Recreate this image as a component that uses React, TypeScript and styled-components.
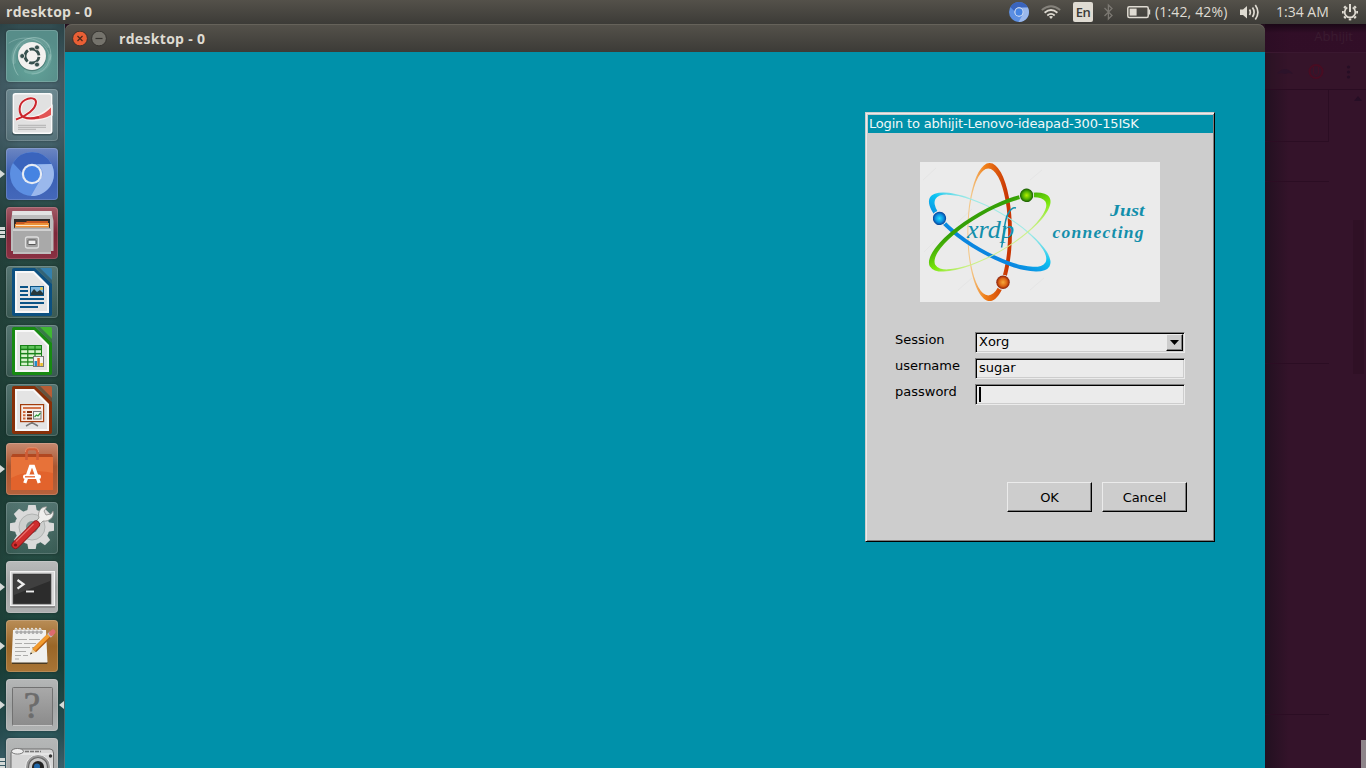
import React from 'react';
import styled, { createGlobalStyle } from 'styled-components';

const TEAL = '#0091aa';
const UI_FONT = '"Open Sans", "Noto Sans", sans-serif';

const GlobalStyle = createGlobalStyle`
  * { box-sizing: border-box; }
  body { margin: 0; overflow: hidden; background: #34132a; }
`;

const Desktop = styled.div`
  width: 1366px;
  height: 768px;
  overflow: hidden;
  display: flex;
  flex-direction: column;
  font-family: ${UI_FONT};
`;

const TopPanel = styled.header`
  height: 24px;
  flex: none;
  display: flex;
  align-items: center;
  justify-content: space-between;
  padding: 0 8px 0 6px;
  background: linear-gradient(#54514a, #3c3b37);
  color: #dfdbd2;
`;

const TitleText = styled.span`
  font-size: 14px;
  line-height: 20px;
  font-weight: 700;
  letter-spacing: 0.32px;
  color: #dfdbd2;
  white-space: pre;
`;

const Tray = styled.div`
  display: flex;
  align-items: center;
  height: 24px;
`;

const TrayCell = styled.div<{ $w: number; $gap: number }>`
  width: ${p => p.$w}px;
  margin-left: ${p => p.$gap}px;
  height: 24px;
  flex: none;
  display: flex;
  align-items: center;
`;

const TrayText = styled.span<{ $spacing: number }>`
  font-size: 14px;
  line-height: 24px;
  white-space: nowrap;
  letter-spacing: ${p => p.$spacing}px;
`;

const LangBadge = styled.div`
  width: 20px;
  height: 20px;
  border-radius: 2px;
  background: #dfdbd2;
  color: #3c3b37;
  font: 600 13px/21px ${UI_FONT};
  text-align: center;
  letter-spacing: -0.5px;
`;

const Workspace = styled.div`
  flex: 1;
  min-height: 0;
  display: flex;
`;

const Launcher = styled.nav`
  width: 65px;
  flex: none;
  overflow: hidden;
  display: flex;
  flex-direction: column;
  gap: 7px;
  padding: 6px 7px 0 6px;
  border-right: 1px solid rgba(150, 170, 170, 0.35);
  background:
    linear-gradient(90deg, rgba(0, 0, 0, 0.12), transparent 30%, transparent 80%, rgba(0, 0, 0, 0.12)),
    linear-gradient(#314c50 0, #46626b 50px, #4a6670 105px, #35565a 150px, #274741 200px, #25483f 330px,
      #1c3e36 420px, #254b42 540px, #1c443c 640px, #2c565a 710px, #456b77 744px);
`;

const Tile = styled.div<{ $bg: string }>`
  position: relative;
  width: 52px;
  height: 52px;
  flex: none;
  border-radius: 4px;
  background: ${p => p.$bg};
  box-shadow: inset 0 0 0 1px rgba(255, 255, 255, 0.16), 0 0 3px rgba(0, 0, 0, 0.35);
  svg { display: block; }
`;

const RunningPip = styled.i<{ $side: 'left' | 'right' }>`
  position: absolute;
  top: 22px;
  ${p => (p.$side === 'left'
    ? 'left: -6px; border-left: 5px solid #d5dad8;'
    : 'right: -6px; border-right: 5px solid #d5dad8;')}
  border-top: 4px solid transparent;
  border-bottom: 4px solid transparent;
`;

const StackPip = styled.i`
  position: absolute;
  left: -6px;
  top: 20px;
  width: 5px;
  height: 11px;
  background: repeating-linear-gradient(#d5dad8 0 3px, transparent 3px 4px);
`;

const WindowFrame = styled.section`
  width: 1200px;
  flex: none;
  display: flex;
  flex-direction: column;
  background: #24101f;
`;

const WindowBar = styled.div`
  height: 28px;
  flex: none;
  display: flex;
  align-items: center;
  padding: 1px 7px 0;
  border-radius: 7px 7px 0 0;
  background: linear-gradient(#55524b, #3c3b37);
  box-shadow: inset 0 1px 0 #65625a;
`;

const WindowControls = styled.div`
  display: flex;
  gap: 3px;
  margin-right: 12px;
`;

const RemoteScreen = styled.main`
  flex: 1;
  min-height: 0;
  display: flex;
  justify-content: flex-end;
  align-items: flex-start;
  padding: 60px 50px 0 0;
  background: ${TEAL};
`;

const Dialog = styled.form`
  width: 350px;
  height: 430px;
  display: flex;
  flex-direction: column;
  background: #cdcdcd;
  font: 13px/16px "DejaVu Sans", sans-serif;
  color: #000;
  border: 1px solid;
  border-color: #cdcdcd #000 #000 #cdcdcd;
  box-shadow: inset 1px 1px 0 #ebebeb, inset -1px -1px 0 #7e7e7e;
  padding: 2px 1px 0 2px;
`;

const DialogTitle = styled.div`
  height: 18px;
  flex: none;
  padding-left: 1px;
  background: ${TEAL};
  color: #f2f8f8;
  line-height: 18px;
  letter-spacing: -0.18px;
  white-space: nowrap;
`;

const Banner = styled.div`
  width: 240px;
  height: 140px;
  flex: none;
  margin: 29px 0 30px 52px;
  background: #ebebeb;
  svg { display: block; }
`;

const Fields = styled.div`
  display: grid;
  grid-template-columns: 80px 210px;
  grid-auto-rows: 21px;
  row-gap: 5px;
  margin-left: 27px;
`;

const FieldLabel = styled.label`
  line-height: 16px;
`;

const FieldBox = styled.div`
  display: flex;
  justify-content: space-between;
  height: 21px;
  border: 1px solid;
  border-color: #7e7e7e #ebebeb #ebebeb #7e7e7e;
  box-shadow: inset 1px 1px 0 #000, inset -1px -1px 0 #cdcdcd;
  background: #ebebeb;
  padding: 1px 1px 1px 3px;
  line-height: 15px;
`;

const Caret = styled.span`
  width: 2px;
  height: 15px;
  margin-top: 1px;
  background: #000;
`;

const DropButton = styled.span`
  width: 17px;
  height: 17px;
  display: flex;
  align-items: center;
  justify-content: center;
  border: 1px solid;
  border-color: #ebebeb #000 #000 #ebebeb;
  box-shadow: inset -1px -1px 0 #7e7e7e;
  background: #cdcdcd;
`;

const ButtonRow = styled.div`
  display: flex;
  gap: 10px;
  margin: 77px 0 0 139px;
`;

const PushButton = styled.button`
  width: 85px;
  height: 30px;
  padding: 1px 0 0;
  background: #cdcdcd;
  border: 1px solid;
  border-color: #ebebeb #000 #000 #ebebeb;
  box-shadow: inset -1px -1px 0 #7e7e7e;
  font: 13px/16px "DejaVu Sans", sans-serif;
  letter-spacing: -0.1px;
  color: #000;
`;

const BackWindow = styled.aside`
  flex: 1;
  min-width: 0;
  display: flex;
  flex-direction: column;
  background: linear-gradient(90deg, #221020 0, #28102200 24px), #34132a;
`;

const BackHeader = styled.div`
  height: 28px;
  flex: none;
  display: flex;
  justify-content: flex-end;
  padding: 3px 13px 0 0;
  font-size: 13px;
  line-height: 18px;
  color: #3a1b30;
  background: linear-gradient(#1a0716, rgba(48, 12, 38, 0.7) 9px);
`;

const BackToolbar = styled.div`
  height: 38px;
  flex: none;
  border-top: 1px solid #3a1830;
  border-bottom: 1px solid #2a0c22;
  background: rgba(56, 22, 42, 0.35);
`;

const BackBody = styled.div`
  flex: 1;
  min-height: 0;
  display: flex;
`;

const BackColumn = styled.div`
  width: 64px;
  flex: none;
`;

const BackBlock = styled.div<{ $h: number; $side?: boolean }>`
  height: ${p => p.$h}px;
  border-bottom: 1px solid #2b0d23;
  border-right: ${p => (p.$side ? '1px solid #2b0d23' : 'none')};
`;

const BackScroll = styled.div`
  flex: 1;
  display: flex;
  flex-direction: column;
  align-items: flex-end;
  justify-content: space-between;
  padding-top: 6px;
`;

const BackThumb = styled.div`
  width: 11px;
  height: 154px;
  margin: 0 2px 0 0;
  background: #2f1025;
`;

const ScrollColumn = styled.div`
  display: flex;
  flex-direction: column;
  gap: 119px;
`;

const OverlayThumb = styled.div`
  width: 5px;
  height: 28px;
  background: #8e858a;
`;

/* ---------- launcher artwork ---------- */

const Icon = ({ children }: { children: React.ReactNode }) => (
  <svg width="52" height="52" viewBox="0 0 52 52">{children}</svg>
);

const DashIcon = () => (
  <Icon>
    <g fill="none" stroke="#d5efe9" strokeLinecap="round">
      <path d="M12 45C3 34 6 12 24 8C38 5 48 17 44 30" strokeWidth=".9" opacity=".4" />
      <path d="M3 13C18 3 38 9 43 24C45 35 37 44 26 44" strokeWidth=".9" opacity=".28" />
      <path d="M14 15C22 7 36 8 42 16M44 26C44 37 32 46 20 41M8 32C6 24 9 17 15 13" strokeWidth="4" opacity=".14" />
    </g>
    <circle cx="26" cy="27" r="14.300" fill="#17312e" opacity=".35" />
    <circle cx="26" cy="26" r="14" fill="#f2f1ef" />
    <circle cx="26" cy="26" r="7" fill="none" stroke="#36504e" strokeWidth="2.800" strokeDasharray="12.9 1.76" strokeDashoffset="-.9" />
    <g fill="#36504e" stroke="#f2f1ef" strokeWidth=".8">
      <circle cx="16.200" cy="26" r="2.500" />
      <circle cx="31" cy="17.400" r="2.500" />
      <circle cx="31" cy="34.600" r="2.500" />
    </g>
  </Icon>
);

const PdfIcon = () => (
  <Icon>
    <rect x="6" y="5" width="41" height="41.5" rx="3" fill="#253b3e" opacity=".55" />
    <rect x="6.500" y="4" width="40" height="41" rx="3" fill="#fafafa" />
    <rect x="8" y="5.500" width="37" height="38" rx="2" fill="#e1e1e1" />
    <path d="M10 30.500C19 28 30 20 30 13C30 9 24 8 19 11C13 15 12 25 18 28C26 31 36 27 45 19V25.500C37 30 26 32 18 29" fill="none" stroke="#f9f1f0" strokeWidth="3.400" />
    <path d="M18 27.300C27 30 37 27 45 18.500V26C36 31 26 31.500 18 28.300Z" fill="#e25555" />
    <path d="M10 30.500C20 27.500 30 20 30 13C30 9 24 8 19 11C12 15 12 25 18 28.300C22 30 28 29.500 33 28" fill="none" stroke="#cb252c" strokeWidth="2" />
    <path d="M12 36.300H40M12 38.300H40M12 40.300H30" stroke="#aaa" strokeWidth=".9" />
  </Icon>
);

const ChromiumMark = ({ r, cx, cy }: { r: number; cx: number; cy: number }) => (
  <g transform={`translate(${cx} ${cy}) scale(${r / 22})`}>
    <circle r="22" fill="#5c8fe2" />
    <path d="M-19-11A22 22 0 0 1 19.500-10H0A10 10 0 0 0-9.500-1Z" fill="#3a64bd" />
    <path d="M19.500-10A22 22 0 0 1-1 22L8.700 5A10 10 0 0 0 5-9.500Z" fill="#9ab8ec" />
    <circle r="10.200" fill="#e6ebf3" />
    <circle r="8" fill="#4583e2" />
  </g>
);

const FilesIcon = () => (
  <Icon>
    <path d="M6.500 4H45.500L47.500 14V44H5V14Z" fill="#bdbdbd" />
    <path d="M6.500 4H45.500L46 8H6Z" fill="#e3e3e3" />
    <rect x="8" y="12" width="36" height="10" fill="#2f2c2b" />
    <path d="M10 15H20L21 14H42V22H9Z" fill="#c95a23" />
    <path d="M9 17H18L19 16H43V22H9Z" fill="#ed9137" />
    <path d="M10 18.500H42" stroke="#fce6c7" strokeWidth="1" />
    <path d="M7 22L9 20.500H43L45 22V47H7Z" fill="#a9a9a9" />
    <path d="M7 22H45V24H7Z" fill="#d0d0d0" />
    <path d="M7 46H45" stroke="#d6d6d6" />
    <rect x="19.500" y="30" width="13" height="11" rx="2" fill="#a0a0a0" stroke="#dedede" strokeWidth="1.300" />
    <rect x="22" y="33" width="8" height="4.500" rx=".7" fill="#eee" stroke="#555" />
  </Icon>
);

const DocumentBase = ({ frame, fold, children }: { frame: string; fold: string; children: React.ReactNode }) => (
  <Icon>
    <path d="M8 2H29L46 18V48Q46 50 44 50H8Q6 50 6 48V4Q6 2 8 2Z" fill={frame} />
    <path d="M34 2H44.500Q46 2 46 3.500V14Z" fill={fold} />
    <path d="M30 2H34L46 14V18Z" fill={frame} opacity=".45" />
    <path d="M9 5H28L43 20V47H9Z" fill="#f8f8f8" />
    <path d="M11 7H27L41 21V45H11Z" fill="#e4e4e4" />
    {children}
  </Icon>
);

const WriterIcon = () => (
  <DocumentBase frame="#0c5080" fold="#3480ad">
    <path d="M14 21H22M14 25H22M14 29H22M14 33H38M14 37H38M14 41H32" stroke="#0a5386" strokeWidth="2" />
    <rect x="24.500" y="20.500" width="13" height="9" fill="#7fb8df" stroke="#0a5386" />
    <path d="M25 29V27L28 23L31 26L34 24L37 27V29Z" fill="#29383b" />
    <circle cx="35.500" cy="22.500" r="1.500" fill="#e7c548" />
  </DocumentBase>
);

const CalcIcon = () => (
  <DocumentBase frame="#178a12" fold="#3fb832">
    <rect x="14" y="20" width="22" height="21" fill="#188118" />
    {[21, 25.200, 29.400, 33.600, 37.600].map(y => (
      <g key={y} fill={y === 21 ? '#5fc35a' : '#d8f3cd'}>
        <rect x="15.200" y={y} width="6" height="2.700" />
        <rect x="22.400" y={y} width="6" height="2.700" />
        <rect x="29.600" y={y} width="5.400" height="2.700" />
      </g>
    ))}
    <rect x="27.500" y="31.500" width="10" height="10" fill="#f2f2f2" stroke="#777" />
    <rect x="28.500" y="36" width="2.500" height="5" fill="#238cca" />
    <rect x="31.300" y="33" width="2.500" height="8" fill="#e06827" />
    <rect x="34.300" y="38" width="2.500" height="3" fill="#e8bd27" />
  </DocumentBase>
);

const ImpressIcon = () => (
  <DocumentBase frame="#873009" fold="#b85d35">
    <path d="M26 38V40M20 42L26 38.500L32 42" stroke="#777" strokeWidth="1.500" fill="none" />
    <rect x="14.600" y="20.600" width="23" height="17" fill="#f6ece6" stroke="#a23c0c" strokeWidth="1.200" />
    <path d="M17 24H35" stroke="#d0673a" strokeWidth="1.800" />
    <path d="M17 28H19.500M17 31.300H19.500M17 34.500H19.500" stroke="#d0673a" strokeWidth="1.900" />
    <path d="M21 28H26M21 31.300H26M21 34.500H26" stroke="#7a2b0b" strokeWidth="1.900" />
    <rect x="27.500" y="27.500" width="7.500" height="7.500" fill="#eef5ec" stroke="#777" />
    <path d="M28.500 33L30.500 31L32 32L34.500 29" fill="none" stroke="#2d973a" strokeWidth="1.200" />
  </DocumentBase>
);

const SoftwareIcon = () => (
  <Icon>
    <path d="M6.500 11H45.500L47 14H5Z" fill="#b14821" />
    <path d="M5 14H47V47H5Z" fill="#e2632c" />
    <path d="M5 14H47V30Q26 25 5 35Z" fill="#f08a4e" opacity=".4" />
    <path d="M20.500 17V9Q20.500 6 23.500 6H28.500Q31.500 6 31.500 9V17" fill="none" stroke="#cf5c36" strokeWidth="2.600" />
    <path d="M19.500 9Q19.500 4.800 23.500 4.800H28.500Q32.500 4.800 32.500 9" fill="none" stroke="#ef9a75" strokeWidth=".8" />
    <path d="M18.800 40L24.600 23.500H27.400L33.200 40" fill="none" stroke="#fff" strokeWidth="3.300" />
    <rect x="17" y="31.500" width="18" height="4.500" rx="2" fill="#fff" />
    <path d="M19 33.800H29" stroke="#e4622d" strokeWidth="1.300" />
  </Icon>
);

const SettingsIcon = () => (
  <Icon>
    <g fill="#dadada">
      <circle cx="26" cy="25" r="17.500" />
      {[0, 45, 90, 135, 180, 225, 270, 315].map(a => (
        <path key={a} d="M21 10L22.300 3H29.700L31 10Z" transform={`rotate(${a} 26 25)`} />
      ))}
    </g>
    <circle cx="26" cy="25" r="13" fill="#cdcfce" stroke="#b0b3b2" />
    <circle cx="26" cy="25" r="6" fill="#7b8f8d" />
    <path d="M31 25L28 21L33 16C31 9 36 4 41 5L38 9L40 13L45 12L47 9C49 15 43 20 37 19Z" fill="#efefed" stroke="#8a8a88" strokeWidth=".8" />
    <path d="M9.500 43L30 22.500" stroke="#8b1216" strokeWidth="8" strokeLinecap="round" />
    <path d="M9.500 43L30 22.500" stroke="#cf2e2e" strokeWidth="6.400" strokeLinecap="round" />
    <path d="M10 39.500L27.500 22" stroke="#e8706c" strokeWidth="1.200" />
    <circle cx="9.500" cy="43" r="1.600" fill="#7d1417" />
  </Icon>
);

const TerminalIcon = () => (
  <Icon>
    <rect x="4" y="10" width="45" height="37" rx="1" fill="#8c8c8c" />
    <rect x="4.500" y="10.500" width="44" height="34" fill="#dadada" stroke="#f2f2f2" />
    <rect x="7" y="13" width="38" height="30" fill="#2c2c2c" stroke="#555" strokeWidth=".7" />
    <path d="M8 14H44V20L8 34Z" fill="#4c4c4c" opacity=".6" />
    <path d="M11.500 19L17.500 23.300L11.500 27.600" fill="none" stroke="#eee" strokeWidth="2.300" />
    <path d="M20 30.500H28" stroke="#eee" strokeWidth="1.900" />
  </Icon>
);

const EditorIcon = () => (
  <Icon>
    <path d="M6 42H42L41 44H6Z" fill="#4a3a22" />
    <path d="M7 10H40L41.500 42.500H5.500Z" fill="#f0f0ee" />
    <path d="M9 19.500H21M23 19.500H34M9 23.500H16M18 23.500H30M9 27.500H24M26 27.500H33M9 31.500H20M9 35.500H15M17 35.500H22M9 39H13" stroke="#a5a5a3" strokeWidth=".9" />
    {[11, 15, 19, 23, 27, 31, 35].map(x => (
      <g key={x}>
        <circle cx={x} cy="12" r="1.500" fill="#555" />
        <path d={`M${x} 13V9.500Q${x - 1.500} 7 ${x - 2} 10`} fill="none" stroke="#e5e5e5" strokeWidth="1.200" />
      </g>
    ))}
    <path d="M24 34.500L26.500 28.500L29.800 32Z" fill="#ead0a0" />
    <path d="M24 34.500L24.900 32.300L26.200 33.600Z" fill="#222" />
    <path d="M28.200 30.500L43.500 15.500" stroke="#b45f12" strokeWidth="5.200" />
    <path d="M27.800 30L43 15" stroke="#f39c2e" strokeWidth="3.600" />
    <path d="M43 15.800L45.500 13.400" stroke="#b9bdc0" strokeWidth="5.200" />
    <path d="M45.500 13.400L47 12" stroke="#dc6b6f" strokeWidth="5" strokeLinecap="round" />
  </Icon>
);

const UnknownIcon = () => (
  <Icon>
    <defs>
      <linearGradient id="unknownPlate" x1="0" y1="0" x2="0" y2="1">
        <stop offset="0" stopColor="#a9a9a9" />
        <stop offset="1" stopColor="#8b8b8b" />
      </linearGradient>
    </defs>
    <rect x="6.500" y="8.500" width="40" height="38" rx="1" fill="url(#unknownPlate)" stroke="#717171" />
    <path d="M7 46.500H46" stroke="#c8c8c8" />
    <text x="26" y="38.500" textAnchor="middle" fontFamily="Liberation Serif, serif" fontSize="37" fill="#6c6c6c" stroke="#6c6c6c" strokeWidth=".7">?</text>
  </Icon>
);

const CameraIcon = () => (
  <Icon>
    <path d="M5 15Q5 11 9 11H44Q47.500 11 47.500 15V46H5Z" fill="#d6d6d6" stroke="#6d6d6d" />
    <path d="M6 16H47" stroke="#f4f4f4" />
    <ellipse cx="11.500" cy="13.300" rx="6" ry="2.800" fill="#eee" stroke="#777" />
    <path d="M19 13.500H35" stroke="#777" strokeWidth="1.500" strokeDasharray="4 1" />
    <circle cx="44.500" cy="18" r="1.700" fill="#333" />
    <circle cx="32" cy="29" r="12.500" fill="#999" stroke="#f0f0f0" />
    <circle cx="32" cy="29" r="9.500" fill="#c9c9c9" stroke="#666" strokeWidth="1.200" />
    <circle cx="32" cy="29" r="6" fill="#222" />
    <circle cx="31" cy="28.500" r="3" fill="#1f66a8" />
  </Icon>
);

type Pip = 'none' | 'left' | 'both' | 'stack';

const glass = 'linear-gradient(rgba(190,220,225,.32), rgba(190,215,215,.14))';

const apps: { name: string; bg: string; pip: Pip; icon: React.ReactNode }[] = [
  { name: 'dash', bg: 'radial-gradient(circle at 50% 70%, #63a49a, #578d89 70%)', pip: 'none', icon: <DashIcon /> },
  { name: 'pdf', bg: glass, pip: 'none', icon: <PdfIcon /> },
  { name: 'chromium', bg: 'linear-gradient(#6c86c2, #3a60b4 50%, #4468ba)', pip: 'left', icon: <Icon><ChromiumMark r={22} cx={26} cy={26} /></Icon> },
  { name: 'files', bg: 'linear-gradient(#a25a66, #7d2739 50%, #8a3042)', pip: 'stack', icon: <FilesIcon /> },
  { name: 'writer', bg: glass, pip: 'none', icon: <WriterIcon /> },
  { name: 'calc', bg: glass, pip: 'none', icon: <CalcIcon /> },
  { name: 'impress', bg: glass, pip: 'none', icon: <ImpressIcon /> },
  { name: 'software', bg: 'linear-gradient(#c78a70, #aa5630 45%, #b5623c)', pip: 'left', icon: <SoftwareIcon /> },
  { name: 'settings', bg: glass, pip: 'none', icon: <SettingsIcon /> },
  { name: 'terminal', bg: 'linear-gradient(#b9bbbb, #a2a4a4 50%, #adafaf)', pip: 'left', icon: <TerminalIcon /> },
  { name: 'editor', bg: 'linear-gradient(#b98d57, #9a6627 50%, #a87536)', pip: 'left', icon: <EditorIcon /> },
  { name: 'unknown', bg: 'linear-gradient(#b5b7b7, #a2a4a4 50%, #b0b2b2)', pip: 'both', icon: <UnknownIcon /> },
  { name: 'camera', bg: 'linear-gradient(#b5b7b7, #a2a4a4)', pip: 'stack', icon: <CameraIcon /> },
];

/* ---------- xrdp banner ---------- */

const ORBIT = 'M69.7 1A22.3 69 0 1 1 69.600 1ZM68.200 6.500A19.900 63.500 0 1 0 68.300 6.500Z';

const Orbit = ({ angle, id, ball }: { angle: number; id: string; ball: string }) => (
  <g transform={`rotate(${angle} 69.7 70)`}>
    <path d={ORBIT} fill={`url(#${id})`} fillRule="evenodd" />
    <circle cx="83" cy="120.300" r="7.600" fill="#ebebeb" />
    <circle cx="83" cy="120.300" r="6.700" fill={ball} />
  </g>
);

const XrdpBanner = () => (
  <svg width="240" height="140" viewBox="0 0 240 140">
    <defs>
      {[
        ['orbO', '#f3c88a', '#f07f18', '#c93503'],
        ['orbB', '#9feae6', '#0cc4f2', '#0a86e0'],
        ['orbG', '#cdf08a', '#7ce80c', '#35a006'],
      ].map(([id, a, b, c]) => (
        <linearGradient key={id} id={id} x1="0" y1="0" x2="1" y2="0">
          <stop offset=".08" stopColor={a} />
          <stop offset=".4" stopColor={b} />
          <stop offset=".9" stopColor={c} />
        </linearGradient>
      ))}
      {[
        ['ballO', '#f5a83c', '#dc6414', '#8a1c08'],
        ['ballB', '#22e0fa', '#0a8ee0', '#063f95'],
        ['ballG', '#b4f000', '#4fae04', '#185a02'],
      ].map(([id, a, b, c]) => (
        <radialGradient key={id} id={id}>
          <stop offset="0" stopColor={a} />
          <stop offset=".6" stopColor={b} />
          <stop offset="1" stopColor={c} />
        </radialGradient>
      ))}
    </defs>
    <path d="M3 18L16 6M38 60L52 47M4 90L16 78M38 128L52 116M110 128L124 116M110 18L122 8" stroke="#e5e5e5" />
    <Orbit angle={0} id="orbO" ball="url(#ballO)" />
    <Orbit angle={120} id="orbB" ball="url(#ballB)" />
    <Orbit angle={240} id="orbG" ball="url(#ballG)" />
    <text x="47" y="76" fontFamily="Liberation Serif, serif" fontStyle="italic" fontSize="25" textLength="47" lengthAdjust="spacingAndGlyphs" fill="#138fab">xrdp</text>
    <path d="M81.500 85.500C84 76 83.500 58 88.500 51Q92 45 96 46" fill="none" stroke="#138fab" strokeWidth="1.500" />
    <g fontFamily="Liberation Serif, serif" fontStyle="italic" fontWeight="700" fontSize="17.500" fill="#138fab">
      <text x="190" y="54" textLength="34.500" lengthAdjust="spacingAndGlyphs">Just</text>
      <text x="132.500" y="76" textLength="91" lengthAdjust="spacing">connecting</text>
    </g>
  </svg>
);

/* ---------- tray artwork ---------- */

const WifiIcon = () => (
  <svg width="20" height="24" viewBox="0 0 20 24" fill="none" strokeWidth="1.800">
    <path d="M.8 10Q10 2.500 19.200 10" stroke="#85827b" />
    <path d="M3.600 12.800Q10 7.300 16.400 12.800M6.300 15.500Q10 12.300 13.700 15.500" stroke="#dfdbd2" />
    <path d="M8 16.800Q10 15.300 12 16.800L10 19Z" fill="#dfdbd2" />
  </svg>
);

const BluetoothIcon = () => (
  <svg width="9" height="24" viewBox="0 0 9 24" fill="none" stroke="#7b7872" strokeWidth="1.300">
    <path d="M.5 8L8 15.500L4.400 19V5L8 8.500L.5 16" />
  </svg>
);

const BatteryIcon = () => (
  <svg width="24" height="24" viewBox="0 0 24 24">
    <rect x=".8" y="6.800" width="20.400" height="10.600" rx="1.500" fill="none" stroke="#dfdbd2" strokeWidth="1.500" />
    <path d="M22 9.500H23.200V14.500H22Z" fill="#dfdbd2" />
    <rect x="2.600" y="8.600" width="7" height="7" fill="#dfdbd2" />
  </svg>
);

const VolumeIcon = () => (
  <svg width="20" height="24" viewBox="0 0 20 24">
    <path d="M0 9.500H3L7 6V18.500L3 15H0Z" fill="#dfdbd2" />
    <path d="M9.500 9.500Q11.200 12.200 9.500 15M12.500 7.500Q15.700 12.200 12.500 17M15.300 5Q20.500 12.200 15.300 19.500" fill="none" stroke="#dfdbd2" strokeWidth="1.700" />
  </svg>
);

const SessionIcon = () => (
  <svg width="16" height="24" viewBox="0 0 16 24">
    <g fill="none" stroke="#dfdbd2">
      <path d="M5.300 7.600A5.300 5.300 0 1 0 10.700 7.600" strokeWidth="1.700" />
      <path d="M8 4V12" strokeWidth="2" />
      {[45, 90, 135, 180, 225, 270, 315].map(a => (
        <path key={a} d="M8 6V4" strokeWidth="2.500" transform={`rotate(${a} 8 12.200)`} />
      ))}
    </g>
  </svg>
);

export default function App() {
  return (
    <Desktop>
      <GlobalStyle />
      <TopPanel>
        <TitleText>rdesktop - 0</TitleText>
        <Tray>
          <TrayCell $w={20} $gap={0}>
            <svg width="20" height="24"><ChromiumMark r={10} cx={10} cy={12} /></svg>
          </TrayCell>
          <TrayCell $w={20} $gap={12}><WifiIcon /></TrayCell>
          <TrayCell $w={20} $gap={12}><LangBadge>En</LangBadge></TrayCell>
          <TrayCell $w={9} $gap={11}><BluetoothIcon /></TrayCell>
          <TrayCell $w={24} $gap={14}><BatteryIcon /></TrayCell>
          <TrayCell $w={74} $gap={4}><TrayText $spacing={0.15}>(1:42, 42%)</TrayText></TrayCell>
          <TrayCell $w={20} $gap={11}><VolumeIcon /></TrayCell>
          <TrayCell $w={54} $gap={16}><TrayText $spacing={0}>1:34 AM</TrayText></TrayCell>
          <TrayCell $w={16} $gap={12}><SessionIcon /></TrayCell>
        </Tray>
      </TopPanel>
      <Workspace>
        <Launcher>
          {apps.map(app => (
            <Tile key={app.name} $bg={app.bg}>
              {app.icon}
              {(app.pip === 'left' || app.pip === 'both') && <RunningPip $side="left" />}
              {app.pip === 'both' && <RunningPip $side="right" />}
              {app.pip === 'stack' && <StackPip />}
            </Tile>
          ))}
        </Launcher>
        <WindowFrame>
          <WindowBar>
            <WindowControls>
              <svg width="16" height="16" viewBox="0 0 16 16">
                <circle cx="8" cy="7.500" r="7.400" fill="#e95f35" stroke="#34322e" />
                <path d="M5.500 5L10.500 10M10.500 5L5.500 10" stroke="#4a2a1c" strokeWidth="1.200" />
              </svg>
              <svg width="16" height="16" viewBox="0 0 16 16">
                <circle cx="8" cy="7.500" r="7.400" fill="#75736c" stroke="#34322e" />
                <path d="M4.500 7.500H11.500" stroke="#35332f" strokeWidth="1.200" />
              </svg>
            </WindowControls>
            <TitleText>rdesktop - 0</TitleText>
          </WindowBar>
          <RemoteScreen>
            <Dialog onSubmit={e => e.preventDefault()}>
              <DialogTitle>Login to abhijit-Lenovo-ideapad-300-15ISK</DialogTitle>
              <Banner><XrdpBanner /></Banner>
              <Fields>
                <FieldLabel>Session</FieldLabel>
                <FieldBox>
                  Xorg
                  <DropButton>
                    <svg width="9" height="5" viewBox="0 0 9 5"><path d="M0 0H9L4.500 5Z" /></svg>
                  </DropButton>
                </FieldBox>
                <FieldLabel>username</FieldLabel>
                <FieldBox>sugar</FieldBox>
                <FieldLabel>password</FieldLabel>
                <FieldBox><Caret /></FieldBox>
              </Fields>
              <ButtonRow>
                <PushButton type="submit">OK</PushButton>
                <PushButton type="button">Cancel</PushButton>
              </ButtonRow>
            </Dialog>
          </RemoteScreen>
        </WindowFrame>
        <BackWindow>
          <BackHeader>Abhijit</BackHeader>
          <BackToolbar>
            <svg width="101" height="36" viewBox="0 0 101 36">
              <path d="M12 21Q20 11 28 21L24 20L20 21L16 20Z" fill="#2c132a" />
              <circle cx="51" cy="18.500" r="6.500" fill="none" stroke="#480c22" strokeWidth="2" />
              <path d="M48.500 14V20L51 23L53.500 20V14" fill="none" stroke="#430f26" />
              <g fill="#260e25"><circle cx="83.500" cy="14" r="1.600" /><circle cx="83.500" cy="19" r="1.600" /><circle cx="83.500" cy="24" r="1.600" /></g>
            </svg>
          </BackToolbar>
          <BackBody>
            <BackColumn>
              <BackBlock $h={52} $side />
              <BackBlock $h={40} />
              <BackBlock $h={182} />
              <BackBlock $h={351} />
            </BackColumn>
            <BackScroll>
              <ScrollColumn>
                <svg width="13" height="5" viewBox="0 0 13 5"><path d="M1 5L5 0L9 5Z" fill="#260e25" /></svg>
                <BackThumb />
              </ScrollColumn>
              <OverlayThumb />
            </BackScroll>
          </BackBody>
        </BackWindow>
      </Workspace>
    </Desktop>
  );
}
